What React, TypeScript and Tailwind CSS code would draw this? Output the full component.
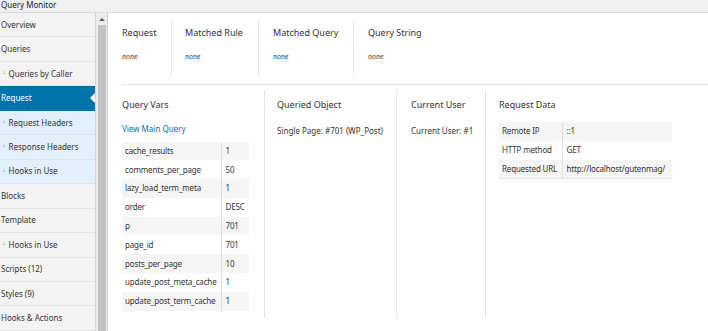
import React from 'react';

type NavItem = { label: string; sub?: boolean; active?: boolean; child?: boolean };

const nav: NavItem[] = [
  { label: 'Overview' },
  { label: 'Queries' },
  { label: 'Queries by Caller', sub: true },
  { label: 'Request', active: true },
  { label: 'Request Headers', sub: true, child: true },
  { label: 'Response Headers', sub: true, child: true },
  { label: 'Hooks in Use', sub: true, child: true },
  { label: 'Blocks' },
  { label: 'Template' },
  { label: 'Hooks in Use', sub: true },
  { label: 'Scripts (12)' },
  { label: 'Styles (9)' },
  { label: 'Hooks & Actions' },
];

const queryVars: [string, string][] = [
  ['cache_results', '1'],
  ['comments_per_page', '50'],
  ['lazy_load_term_meta', '1'],
  ['order', 'DESC'],
  ['p', '701'],
  ['page_id', '701'],
  ['posts_per_page', '10'],
  ['update_post_meta_cache', '1'],
  ['update_post_term_cache', '1'],
];

const requestData: [string, string][] = [
  ['Remote IP', '::1'],
  ['HTTP method', 'GET'],
  ['Requested URL', 'http://localhost/gutenmag/'],
];

function KeyTable({ rows, keyW, valW }: { rows: [string, string][]; keyW: string; valW: string }) {
  return (
    <table className="border-collapse text-[8px] leading-[10px] tracking-[-0.15px]">
      <tbody>
        {rows.map(([k, v], i) => (
          <tr key={k} className={i % 2 === 0 ? 'bg-[#f5f5f5]' : 'bg-white'}>
            <td className={`${keyW} h-[18.8px] pl-[3px] border-r border-[#dedede] whitespace-nowrap`}>{k}</td>
            <td className={`${valW} h-[18.8px] pl-[4px] whitespace-nowrap`}>{v}</td>
          </tr>
        ))}
      </tbody>
    </table>
  );
}

export default function App() {
  return (
    <div className="w-[708px] h-[331px] overflow-hidden bg-white flex flex-col text-[#333] font-['Noto_Sans',sans-serif]">
      {/* Title bar */}
      <div className="h-[13px] shrink-0 bg-[#f0f0f0] border-b border-[#dadada] pl-[1px] text-[8px] leading-[10px] text-[#222]">
        Query Monitor
      </div>

      <div className="flex flex-1 min-h-0">
        {/* Sidebar */}
        <nav className="w-[96px] shrink-0 bg-[#f3f3f3] border-r border-[#d6d6d6] flex flex-col">
          {nav.map((item, i) => (
            <div
              key={i}
              className={
                'relative h-[24.46px] shrink-0 flex items-center pl-[1px] text-[8px] border-b ' +
                (item.active
                  ? 'bg-[#0073aa] text-white border-[#0073aa]'
                  : item.child
                  ? 'bg-[#e1f0fb] border-[#d3e6f4]'
                  : 'border-[#e4e4e4]')
              }
            >
              {item.sub && <span className="text-[5px] text-[#999] mr-[3px] ml-[1px]">└</span>}
              {item.label}
              {item.active && (
                <span className="absolute right-0 top-1/2 -translate-y-1/2 w-0 h-0 border-y-[5px] border-y-transparent border-r-[5px] border-r-white" />
              )}
            </div>
          ))}
        </nav>

        {/* Scrollbar */}
        <div className="w-[12px] shrink-0 bg-[#ececec] border-r border-[#cfcfcf] flex flex-col items-center">
          <div className="h-[12px] flex items-center justify-center">
            <span className="w-0 h-0 border-x-[3px] border-x-transparent border-b-[3px] border-b-[#606060]" />
          </div>
          <div className="w-[8px] flex-1 bg-[#c2c2c2]" />
        </div>

        {/* Main panel */}
        <main className="flex-1 min-w-0 pl-[14px]">
          {/* Top section */}
          <div className="pt-[7px] pb-[7px] border-b border-[#e5e5e5] flex">
            {[
              ['Request', 'w-[50px]', ''],
              ['Matched Rule', 'w-[87px]', 'pl-[13px]'],
              ['Matched Query', 'w-[95px]', 'pl-[14px]'],
            ].map(([h, w, pl]) => (
              <div key={h} className={`${w} ${pl} h-[57px] border-r border-[#e5e5e5]`}>
                <div className="pt-[7px] text-[9px] leading-[12px]">{h}</div>
                <div className="mt-[13px] text-[7px] leading-[10px] italic text-[#444]">none</div>
              </div>
            ))}
            <div className="pl-[14px] h-[57px]">
              <div className="pt-[7px] text-[9px] leading-[12px]">Query String</div>
              <div className="mt-[13px] text-[7px] leading-[10px] italic text-[#444]">none</div>
            </div>
          </div>

          {/* Second section */}
          <div className="pt-[5px] flex">
            <div className="w-[143px] h-[228px] border-r border-[#e5e5e5]">
              <div className="pt-[9px] text-[9px] leading-[12px]">Query Vars</div>
              <div className="mt-[13px] text-[8px] leading-[10px] text-[#0073aa]">View Main Query</div>
              <div className="mt-[7.5px]">
                <KeyTable rows={queryVars} keyW="w-[99px]" valW="w-[28px]" />
              </div>
            </div>
            <div className="w-[132px] h-[228px] pl-[12px] border-r border-[#e5e5e5]">
              <div className="pt-[9px] text-[9px] leading-[12px]">Queried Object</div>
              <div className="mt-[15px] text-[8px] leading-[10px] whitespace-nowrap">Single Page: #701 (WP_Post)</div>
            </div>
            <div className="w-[89px] h-[228px] pl-[14px] border-r border-[#e5e5e5]">
              <div className="pt-[9px] text-[9px] leading-[12px]">Current User</div>
              <div className="mt-[15px] text-[8px] leading-[10px] whitespace-nowrap">Current User: #1</div>
            </div>
            <div className="pl-[13px] h-[228px]">
              <div className="pt-[9px] text-[9px] leading-[12px]">Request Data</div>
              <div className="mt-[11px] border-b border-[#e3e3e3] w-fit">
                <KeyTable rows={requestData} keyW="w-[63px]" valW="w-[110px]" />
              </div>
            </div>
          </div>
        </main>
      </div>
    </div>
  );
}
